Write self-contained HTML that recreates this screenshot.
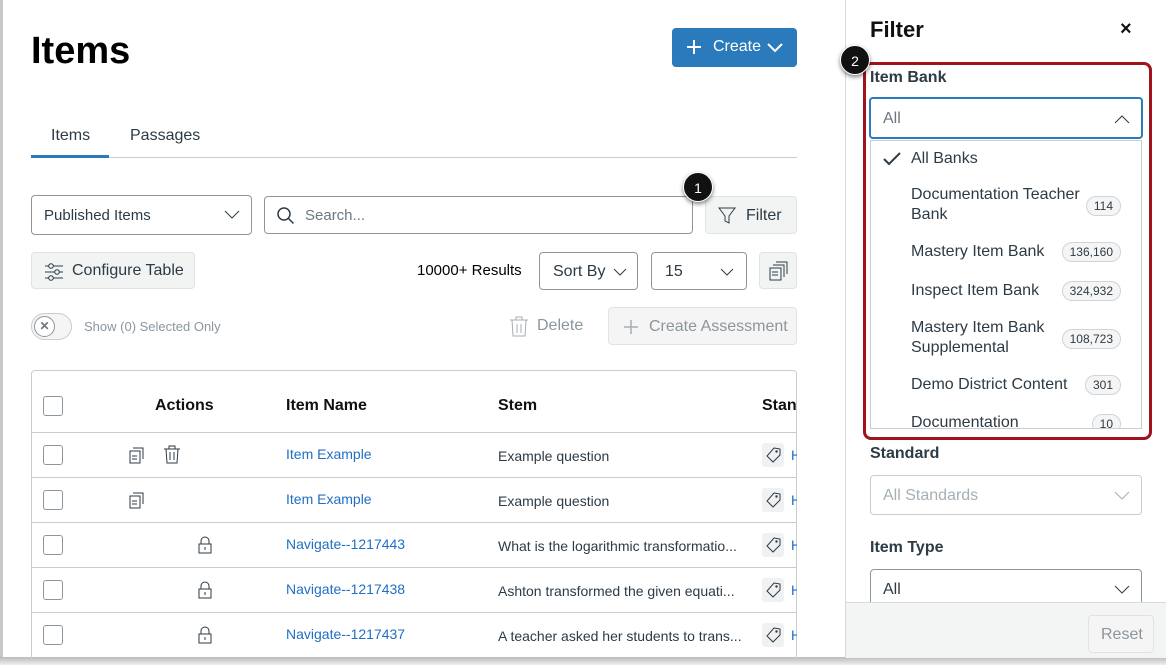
<!DOCTYPE html>
<html><head><meta charset="utf-8"><style>
*{box-sizing:border-box;margin:0;padding:0}
body{width:1166px;height:665px;overflow:hidden;background:#fff;font-family:"Liberation Sans",sans-serif;color:#2d3b45;position:relative}
.a{position:absolute}
.box{position:absolute;border:1px solid #8b969e;border-radius:4px;background:#fff}
.btn{position:absolute;background:#f2f4f4;border:1px solid #e0e3e5;border-radius:4px}
.t{position:absolute;white-space:nowrap}
.chk{position:absolute;left:43px;width:20px;height:20px;border:1px solid #8b969e;border-radius:3px;background:#fff}
.row{position:absolute;left:31px;width:766px;border-top:1px solid #c7cdd1}
.link{color:#1f6fc5;font-size:14px}
.stem{font-size:14px;color:#2d3b45}
.tag{position:absolute;left:762px;width:22px;height:24px;background:#f0f1f2;border-radius:3px}
.tag svg{position:absolute;left:3px;top:4px}
.tl{position:absolute;left:791px;width:6px;overflow:hidden;color:#1f6fc5;font-size:14px}
.badge{position:absolute;right:20px;height:20px;border:1px solid #d0d4d7;border-radius:10px;background:#f5f5f5;font-size:12px;padding:0 7px;line-height:18px}
.opt{position:absolute;left:40px;font-size:16px;line-height:20px}
</style></head><body>
<div class="a" style="left:0;top:0;width:3px;height:660px;background:#c8c8c8"></div>
<div class="a" style="left:0;top:657px;width:1166px;height:8px;background:linear-gradient(#bbb,#eee)"></div>
<div class="t" style="left:31px;top:30px;font-size:38px;font-weight:bold;color:#000">Items</div>
<div class="a" style="left:672px;top:28px;width:125px;height:39px;background:#2b7abc;border-radius:4px;color:#fff;font-size:16px">
<svg class="a" style="left:14px;top:11px" width="16" height="16"><path d="M8 1v14M1 8h14" stroke="#fff" stroke-width="2"/></svg>
<span class="t" style="left:41px;top:10px">Create</span>
<svg class="a" style="left:95px;top:14px" width="16" height="12"><path d="M1 2l7 7 7-7" stroke="#fff" stroke-width="2" fill="none"/></svg></div>
<div class="t" style="left:51px;top:127px;font-size:16px">Items</div>
<div class="t" style="left:130px;top:127px;font-size:16px">Passages</div>
<div class="a" style="left:31px;top:157px;width:766px;height:1px;background:#c7cdd1"></div>
<div class="a" style="left:31px;top:155px;width:78px;height:3px;background:#2b7abc"></div>
<div class="box" style="left:31px;top:195px;width:221px;height:40px"><span class="t" style="left:12px;top:11px;font-size:15px">Published Items</span>
<svg class="a" style="left:192px;top:14px" width="16" height="10"><path d="M1 1l7 7 7-7" stroke="#2d3b45" fill="none"/></svg></div>
<div class="box" style="left:264px;top:196px;width:429px;height:38px">
<svg class="a" style="left:11px;top:9px" width="20" height="20"><circle cx="8" cy="8" r="6" stroke="#2d3b45" stroke-width="1.5" fill="none"/><path d="M12.5 12.5l5 5" stroke="#2d3b45" stroke-width="1.5"/></svg>
<span class="t" style="left:40px;top:10px;font-size:15px;color:#6b7780">Search...</span></div>
<div class="btn" style="left:705px;top:196px;width:92px;height:38px"><svg class="a" style="left:12px;top:10px" width="18" height="18"><path d="M1 1h16l-6 8v7l-4-2v-5z" stroke="#2d3b45" fill="none"/></svg><span class="t" style="left:40px;top:10px;font-size:16px">Filter</span></div>
<div class="a" style="left:683px;top:172px;width:30px;height:30px;border-radius:50%;background:#111;color:#fff;font-size:14px;text-align:center;line-height:30px;box-shadow:0 2px 4px rgba(0,0,0,.5);border:1px solid #fff">1</div>
<div class="btn" style="left:31px;top:252px;width:164px;height:37px">
<svg class="a" style="left:12px;top:10px" width="20" height="18"><path d="M1 3h18M1 9h18M1 15h18" stroke="#2d3b45"/><circle cx="7" cy="3" r="2.3" fill="#f2f4f4" stroke="#2d3b45"/><circle cx="13" cy="9" r="2.3" fill="#f2f4f4" stroke="#2d3b45"/><circle cx="7" cy="15" r="2.3" fill="#f2f4f4" stroke="#2d3b45"/></svg>
<span class="t" style="left:40px;top:9px;font-size:16px">Configure Table</span></div>
<div class="t" style="left:417px;top:262px;font-size:15px;color:#000">10000+ Results</div>
<div class="box" style="left:539px;top:252px;width:99px;height:38px"><span class="t" style="left:13px;top:10px;font-size:16px">Sort By</span><svg class="a" style="left:73px;top:15px" width="14" height="9"><path d="M1 1l6 6 6-6" stroke="#2d3b45" fill="none"/></svg></div>
<div class="box" style="left:651px;top:252px;width:96px;height:38px"><span class="t" style="left:13px;top:10px;font-size:16px">15</span><svg class="a" style="left:68px;top:15px" width="14" height="9"><path d="M1 1l6 6 6-6" stroke="#2d3b45" fill="none"/></svg></div>
<div class="btn" style="left:759px;top:252px;width:38px;height:37px"><svg class="a" style="left:9px;top:8px" width="20" height="20"><rect x="1" y="7" width="11" height="12" fill="none" stroke="#2d3b45"/><path d="M4 4h11v12M7 1h11v12" fill="none" stroke="#2d3b45"/><path d="M3 11h6M3 14h6" stroke="#2d3b45"/></svg></div>
<div class="a" style="left:31px;top:313px;width:41px;height:27px;border:1px solid #c7cdd1;border-radius:14px;background:#f5f5f5"><div class="a" style="left:2px;top:2px;width:21px;height:21px;border-radius:50%;border:1px solid #8b969e;background:#fff;font-size:12px;text-align:center;line-height:19px;color:#6b7780;font-weight:bold">✕</div></div>
<div class="t" style="left:84px;top:319px;font-size:13px;color:#8b969e">Show (0) Selected Only</div>
<svg class="a" style="left:509px;top:316px" width="20" height="21"><path d="M1 4h18M7 4V1h6v3M3 4l1 16h12l1-16M8 8v9M12 8v9" stroke="#a5afb5" fill="none"/></svg>
<div class="t" style="left:537px;top:317px;font-size:16px;color:#8b969e">Delete</div>
<div class="btn" style="left:608px;top:307px;width:189px;height:38px;background:#f5f5f5"><svg class="a" style="left:14px;top:11px" width="16" height="16"><path d="M8 1v14M1 8h14" stroke="#a5afb5" stroke-width="1.5"/></svg><span class="t" style="left:40px;top:10px;font-size:16px;color:#8b969e">Create Assessment</span></div>
<div class="a" style="left:31px;top:370px;width:766px;height:290px;border:1px solid #c7cdd1;border-radius:4px 4px 0 0;border-bottom:none"></div>
<div class="chk" style="top:396px"></div>
<div class="t" style="left:155px;top:397px;font-size:16px;font-weight:bold;color:#111">Actions</div>
<div class="t" style="left:286px;top:397px;font-size:16px;font-weight:bold;color:#111">Item Name</div>
<div class="t" style="left:498px;top:397px;font-size:16px;font-weight:bold;color:#111">Stem</div>
<div class="t" style="left:762px;top:397px;font-size:16px;font-weight:bold;color:#111;width:34px;overflow:hidden">Standard</div>
<div class="row" style="top:432px"></div><div class="row" style="top:477px"></div><div class="row" style="top:522px"></div><div class="row" style="top:567px"></div><div class="row" style="top:612px"></div>
<div class="chk" style="top:445px"></div><div class="chk" style="top:490px"></div><div class="chk" style="top:535px"></div><div class="chk" style="top:580px"></div><div class="chk" style="top:625px"></div>
<svg class="a" style="left:129px;top:446px" width="18" height="18"><rect x="1" y="5" width="10" height="12" fill="none" stroke="#2d3b45"/><path d="M4 2h10v11" fill="none" stroke="#2d3b45"/><path d="M3 10h5M3 13h5" stroke="#2d3b45"/></svg>
<svg class="a" style="left:163px;top:445px" width="18" height="19"><path d="M1 4h16M6 4V1h6v3M3 4l1 14h10l1-14M7 7v8M11 7v8" stroke="#2d3b45" fill="none"/></svg>
<svg class="a" style="left:129px;top:491px" width="18" height="18"><rect x="1" y="5" width="10" height="12" fill="none" stroke="#2d3b45"/><path d="M4 2h10v11" fill="none" stroke="#2d3b45"/><path d="M3 10h5M3 13h5" stroke="#2d3b45"/></svg>
<svg class="a" style="left:197px;top:536px" width="16" height="18"><path d="M4 8V5a4 4 0 0 1 8 0v3" fill="none" stroke="#2d3b45"/><rect x="2" y="8" width="12" height="9" fill="none" stroke="#2d3b45"/><path d="M8 11v3" stroke="#2d3b45"/></svg>
<svg class="a" style="left:197px;top:581px" width="16" height="18"><path d="M4 8V5a4 4 0 0 1 8 0v3" fill="none" stroke="#2d3b45"/><rect x="2" y="8" width="12" height="9" fill="none" stroke="#2d3b45"/><path d="M8 11v3" stroke="#2d3b45"/></svg>
<svg class="a" style="left:197px;top:626px" width="16" height="18"><path d="M4 8V5a4 4 0 0 1 8 0v3" fill="none" stroke="#2d3b45"/><rect x="2" y="8" width="12" height="9" fill="none" stroke="#2d3b45"/><path d="M8 11v3" stroke="#2d3b45"/></svg>
<div class="t link" style="left:286px;top:446px">Item Example</div><div class="t stem" style="left:498px;top:448px">Example question</div>
<div class="t link" style="left:286px;top:491px">Item Example</div><div class="t stem" style="left:498px;top:493px">Example question</div>
<div class="t link" style="left:286px;top:536px">Navigate--1217443</div><div class="t stem" style="left:498px;top:538px">What is the logarithmic transformatio...</div>
<div class="t link" style="left:286px;top:581px">Navigate--1217438</div><div class="t stem" style="left:498px;top:583px">Ashton transformed the given equati...</div>
<div class="t link" style="left:286px;top:626px">Navigate--1217437</div><div class="t stem" style="left:498px;top:628px">A teacher asked her students to trans...</div>
<div class="tag" style="top:443px"><svg width="16" height="16"><path d="M9 1l6 1 0 6-7 7-6-6z" fill="none" stroke="#2d3b45"/><circle cx="11.5" cy="4.5" r="1.2" fill="#2d3b45"/></svg></div>
<div class="tag" style="top:488px"><svg width="16" height="16"><path d="M9 1l6 1 0 6-7 7-6-6z" fill="none" stroke="#2d3b45"/><circle cx="11.5" cy="4.5" r="1.2" fill="#2d3b45"/></svg></div>
<div class="tag" style="top:533px"><svg width="16" height="16"><path d="M9 1l6 1 0 6-7 7-6-6z" fill="none" stroke="#2d3b45"/><circle cx="11.5" cy="4.5" r="1.2" fill="#2d3b45"/></svg></div>
<div class="tag" style="top:578px"><svg width="16" height="16"><path d="M9 1l6 1 0 6-7 7-6-6z" fill="none" stroke="#2d3b45"/><circle cx="11.5" cy="4.5" r="1.2" fill="#2d3b45"/></svg></div>
<div class="tag" style="top:623px"><svg width="16" height="16"><path d="M9 1l6 1 0 6-7 7-6-6z" fill="none" stroke="#2d3b45"/><circle cx="11.5" cy="4.5" r="1.2" fill="#2d3b45"/></svg></div>
<div class="tl" style="top:447px">H</div><div class="tl" style="top:492px">H</div><div class="tl" style="top:537px">H</div><div class="tl" style="top:582px">H</div><div class="tl" style="top:627px">H</div>
<!-- panel -->
<div class="a" style="left:845px;top:0;width:321px;height:658px;border-left:1px solid #d7dadd;background:#fff"></div>
<div class="t" style="left:870px;top:17px;font-size:22px;font-weight:bold;color:#111">Filter</div>
<div class="t" style="left:1120px;top:18px;font-size:20px;font-weight:bold;color:#111">×</div>
<div class="a" style="left:863px;top:62px;width:289px;height:378px;border:3px solid #a0131c;border-radius:8px"></div>
<div class="a" style="left:840px;top:45px;width:30px;height:30px;border-radius:50%;background:#111;color:#fff;font-size:14px;text-align:center;line-height:30px;box-shadow:0 2px 4px rgba(0,0,0,.5);border:1px solid #fff">2</div>
<div class="t" style="left:870px;top:69px;font-size:16px;font-weight:bold">Item Bank</div>
<div class="a" style="left:870px;top:140px;width:272px;height:289px;border:1px solid #c7cdd1;background:#fff;overflow:hidden">
<svg class="a" style="left:12px;top:11px" width="18" height="14"><path d="M1 7l5 5L17 1" stroke="#2d3b45" stroke-width="2" fill="none"/></svg>
<div class="opt" style="top:8px">All Banks</div>
<div class="opt" style="top:44px">Documentation Teacher<br>Bank</div><div class="badge" style="top:55px">114</div>
<div class="opt" style="top:101px">Mastery Item Bank</div><div class="badge" style="top:101px">136,160</div>
<div class="opt" style="top:140px">Inspect Item Bank</div><div class="badge" style="top:140px">324,932</div>
<div class="opt" style="top:177px">Mastery Item Bank<br>Supplemental</div><div class="badge" style="top:188px">108,723</div>
<div class="opt" style="top:234px">Demo District Content</div><div class="badge" style="top:234px">301</div>
<div class="opt" style="top:272px">Documentation</div><div class="badge" style="top:273px">10</div>
</div>
<div class="a" style="left:869px;top:97px;width:274px;height:42px;border:2px solid #2b7abc;border-radius:4px;background:#fff"><span class="t" style="left:12px;top:11px;font-size:16px;color:#6b7780">All</span><svg class="a" style="left:243px;top:15px" width="16" height="10"><path d="M1 9l7-7 7 7" stroke="#2d3b45" fill="none"/></svg></div>
<div class="t" style="left:870px;top:445px;font-size:16px;font-weight:bold">Standard</div>
<div class="a" style="left:870px;top:475px;width:272px;height:40px;border:1px solid #c7cdd1;border-radius:4px"><span class="t" style="left:12px;top:11px;font-size:16px;color:#a5afb5">All Standards</span><svg class="a" style="left:243px;top:15px" width="16" height="10"><path d="M1 1l7 7 7-7" stroke="#a5afb5" fill="none"/></svg></div>
<div class="t" style="left:870px;top:539px;font-size:16px;font-weight:bold">Item Type</div>
<div class="a" style="left:870px;top:569px;width:272px;height:40px;border:1px solid #8b969e;border-radius:4px"><span class="t" style="left:12px;top:11px;font-size:16px">All</span><svg class="a" style="left:243px;top:15px" width="16" height="10"><path d="M1 1l7 7 7-7" stroke="#2d3b45" fill="none"/></svg></div>
<div class="a" style="left:846px;top:602px;width:320px;height:56px;background:#f3f4f4;border-top:1px solid #d7dadd"></div>
<div class="btn" style="left:1088px;top:615px;width:66px;height:38px;background:#f5f5f5"><span class="t" style="left:12px;top:10px;font-size:16px;color:#8b969e">Reset</span></div>
</body></html>
